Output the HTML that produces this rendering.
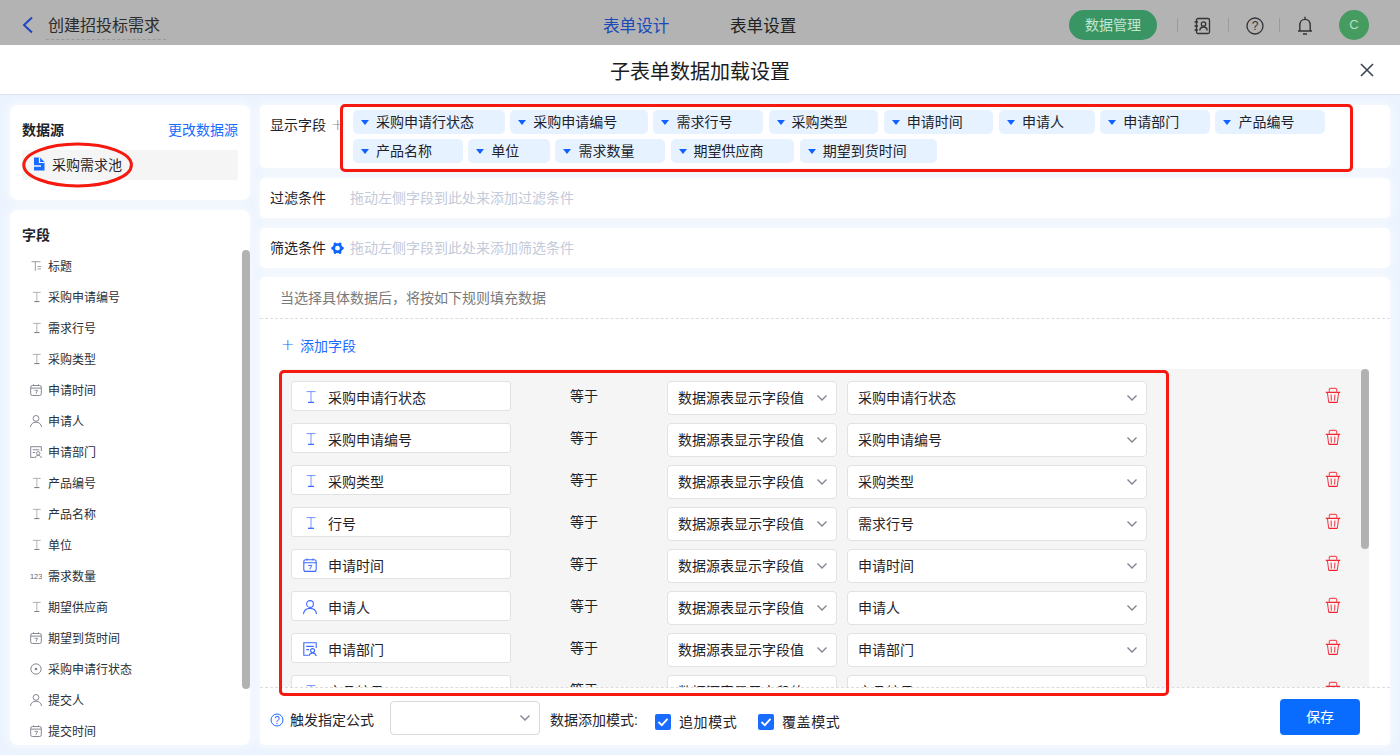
<!DOCTYPE html>
<html lang="zh-CN">
<head>
<meta charset="utf-8">
<title>子表单数据加载设置</title>
<style>
*{box-sizing:border-box;margin:0;padding:0}
html,body{width:1400px;height:755px;overflow:hidden}
body{font-family:"Liberation Sans","Noto Sans CJK SC",sans-serif;font-size:14px;color:#1f2329;background:#ebf3fe;position:relative}
.abs{position:absolute}
#hdr{position:absolute;left:0;top:0;width:1400px;height:45px;background:#b3b3b3}
#hdr .ttl{position:absolute;left:48px;top:14px;font-size:16px;line-height:24px;color:#2b2b2b;white-space:nowrap}
#hdr .ttl-line{position:absolute;left:46px;top:39px;width:120px;border-top:1px dashed #9a9a9a}
#hdr .tab{position:absolute;top:14.5px;font-size:16.6px;line-height:24px;white-space:nowrap}
#hdr .pill{position:absolute;left:1069px;top:10px;width:88px;height:30px;border-radius:15px;background:#3a9565;color:#c2e6cf;font-size:14px;line-height:30px;text-align:center}
#hdr .sep{position:absolute;top:18px;width:1px;height:14px;background:#9b9b9b}
#hdr .ava{position:absolute;left:1339px;top:10px;width:30px;height:30px;border-radius:15px;background:#469b61;color:#b9dec4;font-size:13px;line-height:30px;text-align:center}
#mt{position:absolute;left:0;top:45px;width:1400px;height:50px;background:#fff;border-bottom:1px solid #dfe4ec}
#mt .t{position:absolute;left:0;width:1400px;top:12px;text-align:center;font-size:20px;line-height:30px;color:#1c1c1c}
.card{position:absolute;background:#fff;border-radius:8px;box-shadow:0 0 8px 3px rgba(255,255,255,.6)}

.fld{position:absolute;left:38px;font-size:12px;line-height:18px;color:#2b2f36;white-space:nowrap}
.fic{position:absolute;left:20px;width:12px;height:12px}.fic svg{display:block}
.tag{position:absolute;height:24px;background:#e6f2ff;border-radius:5px;font-size:14px;line-height:24px;color:#1f2329;padding-left:23px;white-space:nowrap}
.tag:before{content:"";position:absolute;left:8px;top:10px;border-left:4.5px solid transparent;border-right:4.5px solid transparent;border-top:5.5px solid #0f62ff}
.lbl{position:absolute;font-size:14px;line-height:20px;color:#1f2329;white-space:nowrap}
.lbl.blue{color:#1a6bff}
.lbl.plus{font-family:"DejaVu Sans Light","DejaVu Sans",sans-serif;font-weight:200;font-size:16px}
.ph{position:absolute;font-size:14px;line-height:20px;color:#c3cad9;white-space:nowrap}
.row{position:absolute;left:0;width:1078px;height:42px}
.fbox{position:absolute;left:11px;top:12px;width:220px;height:30px;background:#fff;border:1px solid #e2e2e2;border-radius:3px;font-size:14px;line-height:30px;padding:1px 0 0 36px;color:#1f2329;white-space:nowrap}
.fbox svg{position:absolute;left:11px;top:8px;overflow:visible}
.eq{position:absolute;left:290px;top:17px;font-size:14px;line-height:20px}
.sel{position:absolute;top:12px;height:34px;background:#fff;border:1px solid #e2e2e2;border-radius:4px;font-size:14px;line-height:32px;padding-left:10px;color:#1f2329;white-space:nowrap}
.sel svg.chev{position:absolute;right:8px;top:12px}
.trash{position:absolute;left:1045px;top:18px}
.cb{position:absolute;width:16px;height:16px;background:#1a6bff;border-radius:2px}
</style>
</head>
<body>
<div id="hdr">
  <svg class="abs" style="left:21px;top:16px" width="14" height="18" viewBox="0 0 14 18"><path d="M11 1.5 L3 9 L11 16.5" fill="none" stroke="#1f45c4" stroke-width="2"/></svg>
  <div class="ttl">创建招投标需求</div>
  <div class="ttl-line"></div>
  <div class="tab" style="left:603px;color:#1a49b8">表单设计</div>
  <div class="tab" style="left:730px;color:#222">表单设置</div>
  <div class="pill">数据管理</div>
  <div class="sep" style="left:1177px"></div>
  <svg class="abs" style="left:1193px;top:17px" width="18" height="18" viewBox="0 0 18 18"><rect x="3.5" y="1.5" width="13" height="15" rx="1.5" fill="none" stroke="#333" stroke-width="1.3"/><path d="M1.5 5H5M1.5 9H5M1.5 13H5" stroke="#333" stroke-width="1.3"/><circle cx="10.5" cy="7" r="2.2" fill="none" stroke="#333" stroke-width="1.3"/><path d="M6.8 13.5C7 11 8.8 10 10.5 10S14 11 14.2 13.5" fill="none" stroke="#333" stroke-width="1.3"/></svg>
  <div class="sep" style="left:1228px"></div>
  <svg class="abs" style="left:1246px;top:17px" width="18" height="18" viewBox="0 0 18 18"><circle cx="9" cy="9" r="8" fill="none" stroke="#333" stroke-width="1.3"/><text x="9" y="13.2" font-size="12" text-anchor="middle" font-family="Liberation Sans, sans-serif" fill="#333">?</text></svg>
  <div class="sep" style="left:1279px"></div>
  <svg class="abs" style="left:1296px;top:16px" width="18" height="20" viewBox="0 0 18 20"><path d="M9 0.8V3M3.8 15V9.5C3.8 5.5 6 3.4 9 3.4S14.2 5.5 14.2 9.5V15M2 15H16M7 18H11" fill="none" stroke="#333" stroke-width="1.4"/></svg>
  <div class="ava">C</div>
</div>
<div id="mt"><div class="t">子表单数据加载设置</div>
  <svg class="abs" style="left:1360px;top:18px" width="14" height="14" viewBox="0 0 14 14"><path d="M1 1 L13 13 M13 1 L1 13" stroke="#3c4353" stroke-width="1.6" fill="none"/></svg>
</div>

<div class="card" style="left:10px;top:105px;width:240px;height:95px">
  <div class="lbl" style="left:12px;top:15px;font-weight:bold">数据源</div>
  <div class="lbl blue" style="left:158px;top:15px">更改数据源</div>
  <div class="abs" style="left:12px;top:45px;width:216px;height:30px;background:#f5f5f5;border-radius:2px"></div>
  <svg class="abs" style="left:23px;top:52px" width="12" height="14" viewBox="0 0 12 14"><path d="M1 0.5H7L11.5 5V13.5H1Z" fill="#1a6bff"/><path d="M6.5 0.5V5.5H11.5" fill="none" stroke="#fff" stroke-width="1.2"/><path d="M1 9H8" stroke="#fff" stroke-width="1.4"/></svg>
  <div class="lbl" style="left:42px;top:50px">采购需求池</div>
</div>
<svg class="abs" style="left:18px;top:140px;z-index:5" width="120" height="52" viewBox="0 0 120 52"><ellipse cx="59.6" cy="24.9" rx="53.8" ry="21" fill="none" stroke="#f5190f" stroke-width="3"/></svg>

<div class="card" style="left:10px;top:210px;width:240px;height:535px;overflow:hidden" id="fields">
  <div class="lbl" style="left:12px;top:15px;font-weight:bold">字段</div>
  <div class="fic" style="top:50px"><svg width="12" height="12" viewBox="0 0 14 14"><path d="M1.8 2H12.2M6.2 2V12.8" fill="none" stroke="#7d828c" stroke-width="1.1" opacity=".8"/><path d="M8.8 7.6H12.8M8.8 10.4H12.8" fill="none" stroke="#7d828c" stroke-width="1.1" opacity=".8"/></svg></div><div class="fld" style="top:48px">标题</div>
<div class="fic" style="top:81px"><svg width="12" height="12" viewBox="0 0 14 14"><path d="M3.5 1.6H12.5M8 1.6V12" fill="none" stroke="#7d828c" stroke-width="1" opacity=".7"/><path d="M5 12.3H11" fill="none" stroke="#7d828c" stroke-width="1.3"/></svg></div><div class="fld" style="top:79px">采购申请编号</div>
<div class="fic" style="top:112px"><svg width="12" height="12" viewBox="0 0 14 14"><path d="M3.5 1.6H12.5M8 1.6V12" fill="none" stroke="#7d828c" stroke-width="1" opacity=".7"/><path d="M5 12.3H11" fill="none" stroke="#7d828c" stroke-width="1.3"/></svg></div><div class="fld" style="top:110px">需求行号</div>
<div class="fic" style="top:143px"><svg width="12" height="12" viewBox="0 0 14 14"><path d="M3.5 1.6H12.5M8 1.6V12" fill="none" stroke="#7d828c" stroke-width="1" opacity=".7"/><path d="M5 12.3H11" fill="none" stroke="#7d828c" stroke-width="1.3"/></svg></div><div class="fld" style="top:141px">采购类型</div>
<div class="fic" style="top:174px"><svg width="12" height="12" viewBox="0 0 14 14"><rect x="0.8" y="1.8" width="12.4" height="11.6" rx="2" fill="none" stroke="#7d828c" stroke-width="1.1"/><path d="M0.8 4.8H13.2M4 0.4V2.4M10 0.4V2.4" fill="none" stroke="#7d828c" stroke-width="1.1"/><path d="M5.2 7.4H8.8L6.8 11.4" fill="none" stroke="#7d828c" stroke-width="1"/></svg></div><div class="fld" style="top:172px">申请时间</div>
<div class="fic" style="top:205px"><svg width="12" height="12" viewBox="0 0 14 14"><circle cx="7" cy="4" r="3.4" fill="none" stroke="#7d828c" stroke-width="1.1"/><path d="M0.4 14.2C1 10.3 3.6 8.4 7 8.4S13 10.3 13.6 14.2" fill="none" stroke="#7d828c" stroke-width="1.1"/></svg></div><div class="fld" style="top:203px">申请人</div>
<div class="fic" style="top:236px"><svg width="12" height="12" viewBox="0 0 14 14"><path d="M5.5 13.3H0.8V0.8H13.2V6" fill="none" stroke="#7d828c" stroke-width="1.1"/><path d="M3.2 4.4H10.8M3.2 7.6H6" fill="none" stroke="#7d828c" stroke-width="1.1"/><circle cx="9.6" cy="8.6" r="2" fill="none" stroke="#7d828c" stroke-width="1.1"/><path d="M6 14C6.5 11.6 8 11 9.6 11S12.7 11.6 13.3 14" fill="none" stroke="#7d828c" stroke-width="1.1"/></svg></div><div class="fld" style="top:234px">申请部门</div>
<div class="fic" style="top:267px"><svg width="12" height="12" viewBox="0 0 14 14"><path d="M3.5 1.6H12.5M8 1.6V12" fill="none" stroke="#7d828c" stroke-width="1" opacity=".7"/><path d="M5 12.3H11" fill="none" stroke="#7d828c" stroke-width="1.3"/></svg></div><div class="fld" style="top:265px">产品编号</div>
<div class="fic" style="top:298px"><svg width="12" height="12" viewBox="0 0 14 14"><path d="M3.5 1.6H12.5M8 1.6V12" fill="none" stroke="#7d828c" stroke-width="1" opacity=".7"/><path d="M5 12.3H11" fill="none" stroke="#7d828c" stroke-width="1.3"/></svg></div><div class="fld" style="top:296px">产品名称</div>
<div class="fic" style="top:329px"><svg width="12" height="12" viewBox="0 0 14 14"><path d="M3.5 1.6H12.5M8 1.6V12" fill="none" stroke="#7d828c" stroke-width="1" opacity=".7"/><path d="M5 12.3H11" fill="none" stroke="#7d828c" stroke-width="1.3"/></svg></div><div class="fld" style="top:327px">单位</div>
<div class="fic" style="top:360px"><svg width="12" height="12" viewBox="0 0 14 14"><text x="0" y="10" font-size="8.6" font-family="Liberation Sans, sans-serif" fill="#5f646e" textLength="14.4" lengthAdjust="spacingAndGlyphs">123</text></svg></div><div class="fld" style="top:358px">需求数量</div>
<div class="fic" style="top:391px"><svg width="12" height="12" viewBox="0 0 14 14"><path d="M3.5 1.6H12.5M8 1.6V12" fill="none" stroke="#7d828c" stroke-width="1" opacity=".7"/><path d="M5 12.3H11" fill="none" stroke="#7d828c" stroke-width="1.3"/></svg></div><div class="fld" style="top:389px">期望供应商</div>
<div class="fic" style="top:422px"><svg width="12" height="12" viewBox="0 0 14 14"><rect x="0.8" y="1.8" width="12.4" height="11.6" rx="2" fill="none" stroke="#7d828c" stroke-width="1.1"/><path d="M0.8 4.8H13.2M4 0.4V2.4M10 0.4V2.4" fill="none" stroke="#7d828c" stroke-width="1.1"/><path d="M5.2 7.4H8.8L6.8 11.4" fill="none" stroke="#7d828c" stroke-width="1"/></svg></div><div class="fld" style="top:420px">期望到货时间</div>
<div class="fic" style="top:453px"><svg width="12" height="12" viewBox="0 0 14 14"><circle cx="7" cy="7" r="6" fill="none" stroke="#7d828c" stroke-width="1.1"/><circle cx="7" cy="7" r="1.5" fill="#7d828c"/></svg></div><div class="fld" style="top:451px">采购申请行状态</div>
<div class="fic" style="top:484px"><svg width="12" height="12" viewBox="0 0 14 14"><circle cx="7" cy="4" r="3.4" fill="none" stroke="#7d828c" stroke-width="1.1"/><path d="M0.4 14.2C1 10.3 3.6 8.4 7 8.4S13 10.3 13.6 14.2" fill="none" stroke="#7d828c" stroke-width="1.1"/></svg></div><div class="fld" style="top:482px">提交人</div>
<div class="fic" style="top:515px"><svg width="12" height="12" viewBox="0 0 14 14"><rect x="0.8" y="1.8" width="12.4" height="11.6" rx="2" fill="none" stroke="#7d828c" stroke-width="1.1"/><path d="M0.8 4.8H13.2M4 0.4V2.4M10 0.4V2.4" fill="none" stroke="#7d828c" stroke-width="1.1"/><path d="M5.2 7.4H8.8L6.8 11.4" fill="none" stroke="#7d828c" stroke-width="1"/></svg></div><div class="fld" style="top:513px">提交时间</div>
  <div class="abs" style="left:232px;top:40px;width:8px;height:439px;border-radius:4px;background:#b2b2b2"></div>
</div>

<div class="card" style="left:260px;top:105px;width:1130px;height:63px;border-radius:5px" id="disp">
  <div class="lbl" style="left:10px;top:10px">显示字段</div>
  <div class="lbl plus" style="left:71px;top:10px;color:#8c8c8c">+</div>
  <div class="tag" style="left:93.0px;top:5px;width:151.6px">采购申请行状态</div>
<div class="tag" style="left:250.2px;top:5px;width:137.6px">采购申请编号</div>
<div class="tag" style="left:393.4px;top:5px;width:109.6px">需求行号</div>
<div class="tag" style="left:508.6px;top:5px;width:109.6px">采购类型</div>
<div class="tag" style="left:623.8px;top:5px;width:109.6px">申请时间</div>
<div class="tag" style="left:739.0px;top:5px;width:95.6px">申请人</div>
<div class="tag" style="left:840.2px;top:5px;width:109.6px">申请部门</div>
<div class="tag" style="left:955.4px;top:5px;width:109.6px">产品编号</div>
<div class="tag" style="left:93.0px;top:34px;width:109.6px">产品名称</div>
<div class="tag" style="left:208.2px;top:34px;width:81.6px">单位</div>
<div class="tag" style="left:295.4px;top:34px;width:109.6px">需求数量</div>
<div class="tag" style="left:410.6px;top:34px;width:123.6px">期望供应商</div>
<div class="tag" style="left:539.8px;top:34px;width:137.6px">期望到货时间</div>
</div>
<div class="abs" style="left:340px;top:104px;width:1013px;height:68px;border:3px solid #f5190f;border-radius:5px;z-index:5"></div>

<div class="card" style="left:260px;top:178px;width:1130px;height:40px;border-radius:5px">
  <div class="lbl" style="left:10px;top:10px">过滤条件</div>
  <div class="ph" style="left:90px;top:10px">拖动左侧字段到此处来添加过滤条件</div>
</div>
<div class="card" style="left:260px;top:228px;width:1130px;height:40px;border-radius:5px">
  <div class="lbl" style="left:10px;top:10px">筛选条件</div>
  <svg class="abs" style="left:71px;top:14px" width="13" height="13" viewBox="0 0 13 13"><circle cx="6.5" cy="6.2" r="3.7" fill="none" stroke="#0f66ff" stroke-width="2.6"/><path d="M10.40 6.20L11.40 6.20M8.45 9.58L8.95 10.44M4.55 9.58L4.05 10.44M2.60 6.20L1.60 6.20M4.55 2.82L4.05 1.96M8.45 2.82L8.95 1.96" fill="none" stroke="#0f66ff" stroke-width="2.9" stroke-linecap="round"/></svg>
  <div class="ph" style="left:90px;top:10px">拖动左侧字段到此处来添加筛选条件</div>
</div>
<div class="card" style="left:260px;top:277px;width:1130px;height:468px;border-radius:5px;overflow:hidden" id="main">
  <div class="lbl" style="left:20px;top:11px;color:#7a7a7a">当选择具体数据后，将按如下规则填充数据</div>
  <div class="abs" style="left:0;top:41px;width:1130px;border-top:1px dashed #dcdcdc"></div>
  <div class="lbl blue plus" style="left:21px;top:58px">+</div><div class="lbl blue" style="left:40px;top:59px">添加字段</div>
  <div class="abs" id="list" style="left:20px;top:92px;width:1089px;height:318px;background:#f5f5f5;overflow:hidden">
  <div class="row" style="top:0px"><div class="fbox"><svg width="14" height="14" viewBox="0 0 14 14"><path d="M3.5 1.6H12.5M8 1.6V12" fill="none" stroke="#3d6bff" stroke-width="1" opacity=".7"/><path d="M5 12.3H11" fill="none" stroke="#3d6bff" stroke-width="1.3"/></svg>采购申请行状态</div><div class="eq">等于</div><div class="sel" style="left:387px;width:170px">数据源表显示字段值<svg class="chev" width="12" height="8" viewBox="0 0 12 8"><path d="M1.5 1.5L6 6L10.5 1.5" fill="none" stroke="#80858f" stroke-width="1.35"/></svg></div><div class="sel" style="left:567px;width:300px">采购申请行状态<svg class="chev" width="12" height="8" viewBox="0 0 12 8"><path d="M1.5 1.5L6 6L10.5 1.5" fill="none" stroke="#80858f" stroke-width="1.35"/></svg></div><svg class="trash" width="16" height="16" viewBox="0 0 16 16"><path d="M0.8 5.4H15.2M3.6 15.3H12.4" fill="none" stroke="#f5222d" stroke-width="1.3"/><path d="M4.3 5.4V2.6Q4.3 1.4 5.5 1.4H10.5Q11.7 1.4 11.7 2.6V5.4" fill="none" stroke="#f5525a" stroke-width="1.1"/><path d="M2.4 5.4L3.7 15.3M13.6 5.4L12.3 15.3M6.1 7.6L6.4 13.6M9.9 7.6L9.6 13.6" fill="none" stroke="#f5323d" stroke-width="1"/></svg></div>
<div class="row" style="top:42px"><div class="fbox"><svg width="14" height="14" viewBox="0 0 14 14"><path d="M3.5 1.6H12.5M8 1.6V12" fill="none" stroke="#3d6bff" stroke-width="1" opacity=".7"/><path d="M5 12.3H11" fill="none" stroke="#3d6bff" stroke-width="1.3"/></svg>采购申请编号</div><div class="eq">等于</div><div class="sel" style="left:387px;width:170px">数据源表显示字段值<svg class="chev" width="12" height="8" viewBox="0 0 12 8"><path d="M1.5 1.5L6 6L10.5 1.5" fill="none" stroke="#80858f" stroke-width="1.35"/></svg></div><div class="sel" style="left:567px;width:300px">采购申请编号<svg class="chev" width="12" height="8" viewBox="0 0 12 8"><path d="M1.5 1.5L6 6L10.5 1.5" fill="none" stroke="#80858f" stroke-width="1.35"/></svg></div><svg class="trash" width="16" height="16" viewBox="0 0 16 16"><path d="M0.8 5.4H15.2M3.6 15.3H12.4" fill="none" stroke="#f5222d" stroke-width="1.3"/><path d="M4.3 5.4V2.6Q4.3 1.4 5.5 1.4H10.5Q11.7 1.4 11.7 2.6V5.4" fill="none" stroke="#f5525a" stroke-width="1.1"/><path d="M2.4 5.4L3.7 15.3M13.6 5.4L12.3 15.3M6.1 7.6L6.4 13.6M9.9 7.6L9.6 13.6" fill="none" stroke="#f5323d" stroke-width="1"/></svg></div>
<div class="row" style="top:84px"><div class="fbox"><svg width="14" height="14" viewBox="0 0 14 14"><path d="M3.5 1.6H12.5M8 1.6V12" fill="none" stroke="#3d6bff" stroke-width="1" opacity=".7"/><path d="M5 12.3H11" fill="none" stroke="#3d6bff" stroke-width="1.3"/></svg>采购类型</div><div class="eq">等于</div><div class="sel" style="left:387px;width:170px">数据源表显示字段值<svg class="chev" width="12" height="8" viewBox="0 0 12 8"><path d="M1.5 1.5L6 6L10.5 1.5" fill="none" stroke="#80858f" stroke-width="1.35"/></svg></div><div class="sel" style="left:567px;width:300px">采购类型<svg class="chev" width="12" height="8" viewBox="0 0 12 8"><path d="M1.5 1.5L6 6L10.5 1.5" fill="none" stroke="#80858f" stroke-width="1.35"/></svg></div><svg class="trash" width="16" height="16" viewBox="0 0 16 16"><path d="M0.8 5.4H15.2M3.6 15.3H12.4" fill="none" stroke="#f5222d" stroke-width="1.3"/><path d="M4.3 5.4V2.6Q4.3 1.4 5.5 1.4H10.5Q11.7 1.4 11.7 2.6V5.4" fill="none" stroke="#f5525a" stroke-width="1.1"/><path d="M2.4 5.4L3.7 15.3M13.6 5.4L12.3 15.3M6.1 7.6L6.4 13.6M9.9 7.6L9.6 13.6" fill="none" stroke="#f5323d" stroke-width="1"/></svg></div>
<div class="row" style="top:126px"><div class="fbox"><svg width="14" height="14" viewBox="0 0 14 14"><path d="M3.5 1.6H12.5M8 1.6V12" fill="none" stroke="#3d6bff" stroke-width="1" opacity=".7"/><path d="M5 12.3H11" fill="none" stroke="#3d6bff" stroke-width="1.3"/></svg>行号</div><div class="eq">等于</div><div class="sel" style="left:387px;width:170px">数据源表显示字段值<svg class="chev" width="12" height="8" viewBox="0 0 12 8"><path d="M1.5 1.5L6 6L10.5 1.5" fill="none" stroke="#80858f" stroke-width="1.35"/></svg></div><div class="sel" style="left:567px;width:300px">需求行号<svg class="chev" width="12" height="8" viewBox="0 0 12 8"><path d="M1.5 1.5L6 6L10.5 1.5" fill="none" stroke="#80858f" stroke-width="1.35"/></svg></div><svg class="trash" width="16" height="16" viewBox="0 0 16 16"><path d="M0.8 5.4H15.2M3.6 15.3H12.4" fill="none" stroke="#f5222d" stroke-width="1.3"/><path d="M4.3 5.4V2.6Q4.3 1.4 5.5 1.4H10.5Q11.7 1.4 11.7 2.6V5.4" fill="none" stroke="#f5525a" stroke-width="1.1"/><path d="M2.4 5.4L3.7 15.3M13.6 5.4L12.3 15.3M6.1 7.6L6.4 13.6M9.9 7.6L9.6 13.6" fill="none" stroke="#f5323d" stroke-width="1"/></svg></div>
<div class="row" style="top:168px"><div class="fbox"><svg width="14" height="14" viewBox="0 0 14 14"><rect x="0.8" y="1.8" width="12.4" height="11.6" rx="2" fill="none" stroke="#3d6bff" stroke-width="1.1"/><path d="M0.8 4.8H13.2M4 0.4V2.4M10 0.4V2.4" fill="none" stroke="#3d6bff" stroke-width="1.1"/><path d="M5.2 7.4H8.8L6.8 11.4" fill="none" stroke="#3d6bff" stroke-width="1"/></svg>申请时间</div><div class="eq">等于</div><div class="sel" style="left:387px;width:170px">数据源表显示字段值<svg class="chev" width="12" height="8" viewBox="0 0 12 8"><path d="M1.5 1.5L6 6L10.5 1.5" fill="none" stroke="#80858f" stroke-width="1.35"/></svg></div><div class="sel" style="left:567px;width:300px">申请时间<svg class="chev" width="12" height="8" viewBox="0 0 12 8"><path d="M1.5 1.5L6 6L10.5 1.5" fill="none" stroke="#80858f" stroke-width="1.35"/></svg></div><svg class="trash" width="16" height="16" viewBox="0 0 16 16"><path d="M0.8 5.4H15.2M3.6 15.3H12.4" fill="none" stroke="#f5222d" stroke-width="1.3"/><path d="M4.3 5.4V2.6Q4.3 1.4 5.5 1.4H10.5Q11.7 1.4 11.7 2.6V5.4" fill="none" stroke="#f5525a" stroke-width="1.1"/><path d="M2.4 5.4L3.7 15.3M13.6 5.4L12.3 15.3M6.1 7.6L6.4 13.6M9.9 7.6L9.6 13.6" fill="none" stroke="#f5323d" stroke-width="1"/></svg></div>
<div class="row" style="top:210px"><div class="fbox"><svg width="14" height="14" viewBox="0 0 14 14"><circle cx="7" cy="4" r="3.4" fill="none" stroke="#3d6bff" stroke-width="1.1"/><path d="M0.4 14.2C1 10.3 3.6 8.4 7 8.4S13 10.3 13.6 14.2" fill="none" stroke="#3d6bff" stroke-width="1.1"/></svg>申请人</div><div class="eq">等于</div><div class="sel" style="left:387px;width:170px">数据源表显示字段值<svg class="chev" width="12" height="8" viewBox="0 0 12 8"><path d="M1.5 1.5L6 6L10.5 1.5" fill="none" stroke="#80858f" stroke-width="1.35"/></svg></div><div class="sel" style="left:567px;width:300px">申请人<svg class="chev" width="12" height="8" viewBox="0 0 12 8"><path d="M1.5 1.5L6 6L10.5 1.5" fill="none" stroke="#80858f" stroke-width="1.35"/></svg></div><svg class="trash" width="16" height="16" viewBox="0 0 16 16"><path d="M0.8 5.4H15.2M3.6 15.3H12.4" fill="none" stroke="#f5222d" stroke-width="1.3"/><path d="M4.3 5.4V2.6Q4.3 1.4 5.5 1.4H10.5Q11.7 1.4 11.7 2.6V5.4" fill="none" stroke="#f5525a" stroke-width="1.1"/><path d="M2.4 5.4L3.7 15.3M13.6 5.4L12.3 15.3M6.1 7.6L6.4 13.6M9.9 7.6L9.6 13.6" fill="none" stroke="#f5323d" stroke-width="1"/></svg></div>
<div class="row" style="top:252px"><div class="fbox"><svg width="14" height="14" viewBox="0 0 14 14"><path d="M5.5 13.3H0.8V0.8H13.2V6" fill="none" stroke="#3d6bff" stroke-width="1.1"/><path d="M3.2 4.4H10.8M3.2 7.6H6" fill="none" stroke="#3d6bff" stroke-width="1.1"/><circle cx="9.6" cy="8.6" r="2" fill="none" stroke="#3d6bff" stroke-width="1.1"/><path d="M6 14C6.5 11.6 8 11 9.6 11S12.7 11.6 13.3 14" fill="none" stroke="#3d6bff" stroke-width="1.1"/></svg>申请部门</div><div class="eq">等于</div><div class="sel" style="left:387px;width:170px">数据源表显示字段值<svg class="chev" width="12" height="8" viewBox="0 0 12 8"><path d="M1.5 1.5L6 6L10.5 1.5" fill="none" stroke="#80858f" stroke-width="1.35"/></svg></div><div class="sel" style="left:567px;width:300px">申请部门<svg class="chev" width="12" height="8" viewBox="0 0 12 8"><path d="M1.5 1.5L6 6L10.5 1.5" fill="none" stroke="#80858f" stroke-width="1.35"/></svg></div><svg class="trash" width="16" height="16" viewBox="0 0 16 16"><path d="M0.8 5.4H15.2M3.6 15.3H12.4" fill="none" stroke="#f5222d" stroke-width="1.3"/><path d="M4.3 5.4V2.6Q4.3 1.4 5.5 1.4H10.5Q11.7 1.4 11.7 2.6V5.4" fill="none" stroke="#f5525a" stroke-width="1.1"/><path d="M2.4 5.4L3.7 15.3M13.6 5.4L12.3 15.3M6.1 7.6L6.4 13.6M9.9 7.6L9.6 13.6" fill="none" stroke="#f5323d" stroke-width="1"/></svg></div>
<div class="row" style="top:294px"><div class="fbox"><svg width="14" height="14" viewBox="0 0 14 14"><path d="M3.5 1.6H12.5M8 1.6V12" fill="none" stroke="#3d6bff" stroke-width="1" opacity=".7"/><path d="M5 12.3H11" fill="none" stroke="#3d6bff" stroke-width="1.3"/></svg>产品编号</div><div class="eq">等于</div><div class="sel" style="left:387px;width:170px">数据源表显示字段值<svg class="chev" width="12" height="8" viewBox="0 0 12 8"><path d="M1.5 1.5L6 6L10.5 1.5" fill="none" stroke="#80858f" stroke-width="1.35"/></svg></div><div class="sel" style="left:567px;width:300px">产品编号<svg class="chev" width="12" height="8" viewBox="0 0 12 8"><path d="M1.5 1.5L6 6L10.5 1.5" fill="none" stroke="#80858f" stroke-width="1.35"/></svg></div><svg class="trash" width="16" height="16" viewBox="0 0 16 16"><path d="M0.8 5.4H15.2M3.6 15.3H12.4" fill="none" stroke="#f5222d" stroke-width="1.3"/><path d="M4.3 5.4V2.6Q4.3 1.4 5.5 1.4H10.5Q11.7 1.4 11.7 2.6V5.4" fill="none" stroke="#f5525a" stroke-width="1.1"/><path d="M2.4 5.4L3.7 15.3M13.6 5.4L12.3 15.3M6.1 7.6L6.4 13.6M9.9 7.6L9.6 13.6" fill="none" stroke="#f5323d" stroke-width="1"/></svg></div>
  </div>
  <div class="abs" style="left:1101px;top:92px;width:8px;height:180px;border-radius:4px;background:#b2b2b2"></div>
  <div class="abs" style="left:0;top:410px;width:1130px;height:58px;background:#fff;border-top:1px dashed #dcdcdc">
    <svg class="abs" style="left:10px;top:25px" width="14" height="14" viewBox="0 0 14 14"><circle cx="7" cy="7" r="6" fill="none" stroke="#1a6bff" stroke-width="1"/><text x="7" y="10.6" font-size="10" text-anchor="middle" font-family="Liberation Sans, sans-serif" fill="#1a6bff">?</text></svg>
    <div class="lbl" style="left:30px;top:22px">触发指定公式</div>
    <div class="abs" style="left:130px;top:13px;width:150px;height:34px;border:1px solid #d9d9d9;border-radius:4px;background:#fff"><svg class="abs" style="right:8px;top:12px" width="12" height="8" viewBox="0 0 12 8"><path d="M1.5 1.5L6 6L10.5 1.5" fill="none" stroke="#80858f" stroke-width="1.35"/></svg></div>
    <div class="lbl" style="left:290px;top:22px">数据添加模式:</div>
    <div class="cb" style="left:395px;top:26px"><svg width="16" height="16" viewBox="0 0 16 16"><path d="M3.5 8L6.8 11.2L12.5 4.8" fill="none" stroke="#fff" stroke-width="1.8"/></svg></div>
    <div class="lbl" style="left:419px;top:24px;letter-spacing:.6px">追加模式</div>
    <div class="cb" style="left:498px;top:26px"><svg width="16" height="16" viewBox="0 0 16 16"><path d="M3.5 8L6.8 11.2L12.5 4.8" fill="none" stroke="#fff" stroke-width="1.8"/></svg></div>
    <div class="lbl" style="left:522px;top:24px;letter-spacing:.6px">覆盖模式</div>
    <div class="abs" style="left:1020px;top:11px;width:80px;height:36px;border-radius:4px;background:#0a6cff;color:#fff;font-size:14px;line-height:36px;text-align:center">保存</div>
  </div>
</div>
<div class="abs" style="left:279px;top:370px;width:890px;height:326px;border:3px solid #f5190f;border-radius:5px;z-index:5"></div>
</body>
</html>
